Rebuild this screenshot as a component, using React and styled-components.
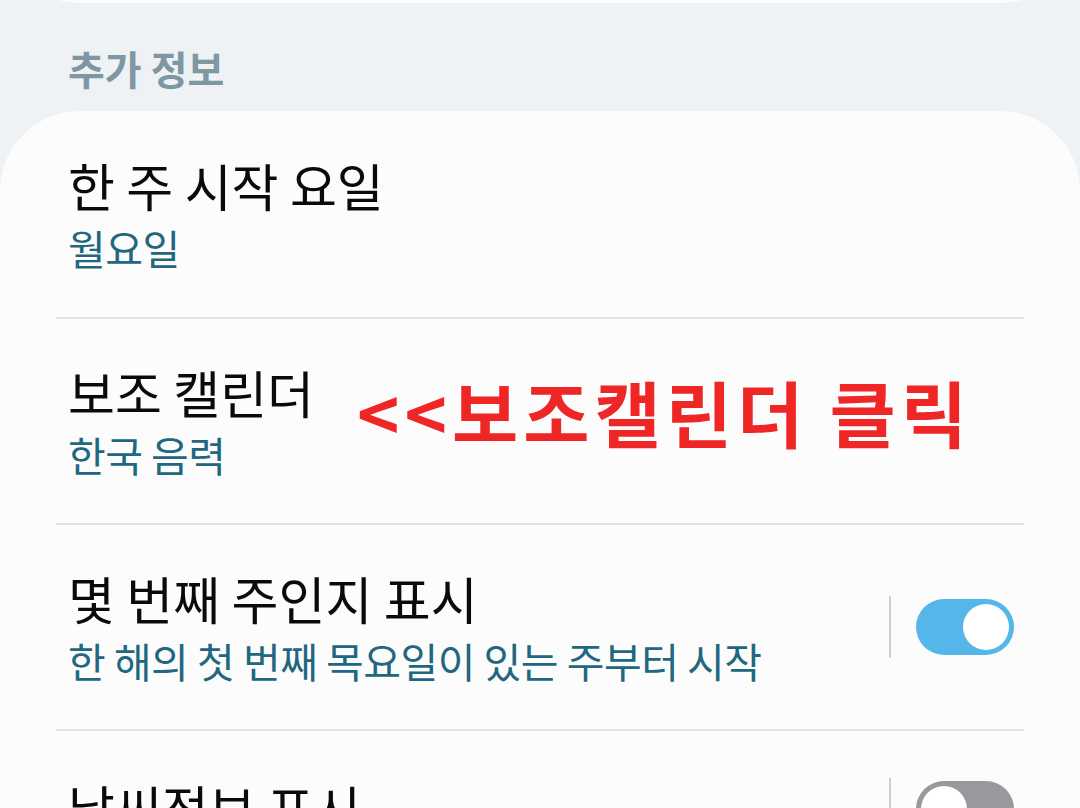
import React from "react"
import styled, { createGlobalStyle } from "styled-components"

const GlobalStyle = createGlobalStyle`
  html, body {
    margin: 0;
    padding: 0;
    background: #eef2f5;
  }
  body {
    font-family: "Noto Sans CJK KR", "Noto Sans", sans-serif;
  }
`

const _rows = [
  { title: "한 주 시작 요일", sub: "월요일" },
  { title: "보조 캘린더", sub: "한국 음력", note: "<<보조캘린더 클릭" },
  { title: "몇 번째 주인지 표시", sub: "한 해의 첫 번째 목요일이 있는 주부터 시작", toggle: true, on: true },
  { title: "날씨정보 표시", sub: "", toggle: true, on: false, clip: true },
]

const App = () => {
  return (
    <Page>
      <GlobalStyle />
      <TopCard />
      <SectionTitle>추가 정보</SectionTitle>
      <Card>
        {_rows.map((row, i) => (
          <Row key={i} first={i === 0} clip={row.clip}>
            <TextBlock>
              <Title>{row.title}</Title>
              {row.sub && <Sub>{row.sub}</Sub>}
            </TextBlock>
            {row.note && <Note>{row.note}</Note>}
            {row.toggle && (
              <ToggleWrap>
                <VLine />
                <Track on={row.on}>
                  <Knob />
                </Track>
              </ToggleWrap>
            )}
          </Row>
        ))}
      </Card>
    </Page>
  )
}

const Page = styled.div`
  width: 1080px;
  height: 808px;
  overflow: hidden;
  background: #eef2f5;
`
const TopCard = styled.div`
  height: 80px;
  margin-top: -77px;
  background: #fcfcfc;
  border-radius: 0 0 80px 80px;
`
const SectionTitle = styled.div`
  padding: 0 0 0 68px;
  margin-top: 35px;
  height: 73px;
  font-size: 40px;
  line-height: 60px;
  font-weight: 600;
  color: #7f96a3;
`
const Card = styled.div`
  background: #fcfcfc;
  border-radius: 80px 80px 0 0;
  padding: 0 56px;
`
const Row = styled.div`
  display: flex;
  align-items: ${props => (props.clip ? "flex-start" : "center")};
  height: 206px;
  box-sizing: border-box;
  padding-left: 12px;
  padding-top: ${props => (props.clip ? "47px" : "0")};
  border-top: ${props => (props.first ? "none" : "2px solid #e3e3e3")};
`
const TextBlock = styled.div`
  display: flex;
  flex-direction: column;
  gap: 8px;
`
const Title = styled.div`
  font-size: 51px;
  line-height: 58px;
  color: #0a0a0a;
  white-space: nowrap;
`
const Sub = styled.div`
  font-size: 41px;
  line-height: 50px;
  letter-spacing: -0.5px;
  color: #21677f;
  white-space: nowrap;
`
const Note = styled.div`
  margin-left: 43px;
  margin-bottom: 20px;
  font-size: 72px;
  line-height: 80px;
  font-weight: 700;
  letter-spacing: 5px;
  color: #ee2626;
  white-space: nowrap;
`
const ToggleWrap = styled.div`
  margin-left: auto;
  margin-right: 10px;
  display: flex;
  align-items: center;
  gap: 25px;
`
const VLine = styled.div`
  width: 2px;
  height: 62px;
  background: #cfcfcf;
`
const Track = styled.div`
  width: 98px;
  height: 56px;
  border-radius: 28px;
  box-sizing: border-box;
  padding: 5px;
  display: flex;
  justify-content: ${props => (props.on ? "flex-end" : "flex-start")};
  background: ${props => (props.on ? "#55b7e9" : "#98989d")};
`
const Knob = styled.div`
  width: 46px;
  height: 46px;
  border-radius: 50%;
  background: #ffffff;
`
export default App
